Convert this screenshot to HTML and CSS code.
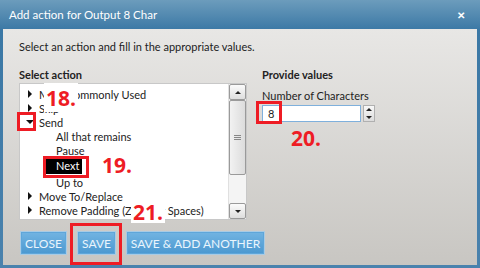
FILE: index.html
```html
<!DOCTYPE html>
<html lang="en">
<head>
    <meta charset="UTF-8">
    <title>Add action</title>
    <link rel="stylesheet" href="styles.css">
</head>
<body>
    <div class="dialog">
        <div class="titlebar">
            <span class="title">Add action for Output 8 Char</span>
            <span class="close-x">&#x2715;</span>
        </div>
        <div class="panel">
            <p class="intro">Select an action and fill in the appropriate values.</p>

            <div class="columns">
                <div class="col-left">
                    <h4>Select action</h4>
                    <div class="listbox">
                        <ul class="tree">
                            <li class="node"><span class="arrow right"></span>Most Commonly Used</li>
                            <li class="node"><span class="arrow right"></span>Skip</li>
                            <li class="node"><span class="arrow down"></span>Send</li>
                            <li class="leaf">All that remains</li>
                            <li class="leaf">Pause</li>
                            <li class="leaf sel-row"><span class="selected">Next</span></li>
                            <li class="leaf">Up to</li>
                            <li class="node"><span class="arrow right"></span>Move To/Replace</li>
                            <li class="node"><span class="arrow right"></span>Remove Padding (Zeros or Spaces)</li>
                        </ul>
                        <div class="scrollbar">
                            <div class="sb-btn"><span class="tri up"></span></div>
                            <div class="sb-thumb"><span class="grip"></span></div>
                            <div class="sb-track"></div>
                            <div class="sb-btn"><span class="tri dn"></span></div>
                        </div>
                    </div>
                </div>
                <div class="col-right">
                    <h4>Provide values</h4>
                    <label class="field-label">Number of Characters</label>
                    <div class="spin">
                        <div class="spin-input">8</div>
                        <div class="spin-btns">
                            <span class="tri up"></span>
                            <span class="tri dn"></span>
                        </div>
                    </div>
                </div>
            </div>

            <div class="buttons">
                <button class="btn btn-close">CLOSE</button>
                <button class="btn btn-save">SAVE</button>
                <button class="btn btn-another">SAVE &amp; ADD ANOTHER</button>
            </div>

            <!-- callouts -->
            <span class="callout c18">18.</span>
            <span class="redbox box-arrow"></span>
            <span class="redbox box-next"></span>
            <span class="callout c19">19.</span>
            <span class="redbox box-eight"></span>
            <span class="callout c20">20.</span>
            <span class="callout c21">21.</span>
            <span class="redbox box-save"></span>
        </div>
    </div>
</body>
</html>
```

FILE: styles.css
```css
* {
    margin: 0;
    padding: 0;
    box-sizing: border-box;
}
html, body {
    width: 480px;
    height: 268px;
    overflow: hidden;
}
body {
    font-family: Lato, "Noto Sans", sans-serif;
    color: #222;
}
.dialog {
    width: 480px;
    height: 268px;
    display: flex;
    flex-direction: column;
    background: linear-gradient(#6c9cbc, #3b78a5 30px, #4a82ad);
    padding: 0 3px 3px 3px;
}
.titlebar {
    height: 29px;
    display: flex;
    align-items: center;
    justify-content: space-between;
    padding: 0 12px 0 6px;
    color: #fff;
}
.title {
    font-size: 11.5px;
}
.close-x {
    font-size: 10px;
    font-weight: bold;
}
.panel {
    flex: 1;
    position: relative;
    background: linear-gradient(#e8e7e5, #c8c6c2);
    padding: 10px 0 0 16px;
    display: flex;
    flex-direction: column;
}
.intro {
    font-size: 11px;
    line-height: 16px;
}
.columns {
    display: flex;
    margin-top: 12px;
}
h4 {
    font-size: 11px;
    font-weight: bold;
    line-height: 16px;
}
.col-left {
    width: 228px;
}
.listbox {
    height: 137px;
    background: #fff;
    border: 1px solid #c8c8c8;
    display: flex;
    justify-content: space-between;
    overflow: hidden;
}
.tree {
    list-style: none;
    padding-top: 3px;
    font-size: 11px;
}
.tree li {
    height: 14px;
    white-space: nowrap;
    display: flex;
    align-items: center;
}
.tree li.sel-row {
    height: 18px;
}
.node {
    padding-left: 7px;
}
.leaf {
    padding-left: 36px;
}
.arrow {
    display: inline-block;
    width: 11px;
    margin-right: 1px;
    height: 8px;
    position: relative;
}
.arrow.right::before {
    content: "";
    position: absolute;
    left: 1px;
    top: 0;
    border-left: 4px solid #111;
    border-top: 4px solid transparent;
    border-bottom: 4px solid transparent;
}
.arrow.down::before {
    content: "";
    position: absolute;
    left: -1px;
    top: 2px;
    border-top: 4px solid #111;
    border-left: 4px solid transparent;
    border-right: 4px solid transparent;
}
.selected {
    background: #000;
    color: #fff;
    margin-left: -10px;
    padding: 0 3px 0 10px;
    line-height: 16px;
}
.scrollbar {
    width: 18px;
    display: flex;
    flex-direction: column;
    background: #f4f4f4;
    border-left: 1px solid #e0e0e0;
}
.sb-btn {
    height: 16px;
    border: 1px solid #9a9a9a;
    border-radius: 2px;
    background: linear-gradient(#fbfbfb, #dedede);
    display: flex;
    align-items: center;
    justify-content: center;
}
.sb-thumb {
    height: 75px;
    border: 1px solid #9a9a9a;
    border-radius: 2px;
    background: linear-gradient(90deg, #f2f2f2, #dcdcdc);
    display: flex;
    align-items: center;
    justify-content: center;
}
.grip {
    width: 7px;
    height: 5px;
    border-top: 1px solid #888;
    border-bottom: 1px solid #888;
    position: relative;
}
.grip::after {
    content: "";
    position: absolute;
    left: 0;
    right: 0;
    top: 1px;
    border-top: 1px solid #888;
}
.sb-track {
    flex: 1;
}
.tri {
    display: inline-block;
    width: 0;
    height: 0;
    border-left: 3px solid transparent;
    border-right: 3px solid transparent;
}
.tri.up {
    border-bottom: 3px solid #222;
}
.tri.dn {
    border-top: 3px solid #222;
}
.col-right {
    margin-left: 15px;
}
.field-label {
    display: block;
    font-size: 11px;
    line-height: 16px;
    margin-top: 5px;
}
.spin {
    display: flex;
    margin-top: 1px;
}
.spin-input {
    width: 99px;
    height: 17px;
    border: 1px solid #7fb0dc;
    background: #fff;
    font-size: 11px;
    line-height: 15px;
    padding-left: 5px;
}
.spin-btns {
    width: 12px;
    margin-left: 2px;
    height: 17px;
    display: flex;
    flex-direction: column;
    align-items: center;
    justify-content: space-around;
    background: linear-gradient(#f8f8f8, #dcdcdc);
    border: 1px solid #b0b0b0;
}
.buttons {
    display: flex;
    gap: 10px;
    margin-top: 11px;
    padding-left: 1px;
}
.btn {
    height: 24px;
    padding: 0;
    font-family: Lato, "Noto Sans", sans-serif;
    font-size: 12px;
    white-space: nowrap;
    color: #eaf5fd;
    background: linear-gradient(#72b4e2, #4b98d0);
    border: 1px solid #a9cbe4;
    box-shadow: inset 0 0 0 1px #5ea6da;
}
.btn-close {
    width: 47px;
}
.btn-save {
    width: 39px;
}
.btn-another {
    width: 139px;
}
.callout {
    position: absolute;
    color: #ee1c24;
    font-weight: bold;
    font-size: 21px;
    line-height: 22px;
    font-family: "Open Sans", "Noto Sans", sans-serif;
    background: #fff;
    padding: 0 2px;
}
.c18 {
    left: 41px;
    top: 54px;
    height: 29px;
    padding-top: 4px;
}
.c19 {
    left: 97px;
    top: 125px;
    background: transparent;
}
.c20 {
    left: 286px;
    top: 98px;
    background: transparent;
}
.c21 {
    left: 128px;
    top: 171px;
    height: 23px;
    padding-top: 1px;
}
.redbox {
    position: absolute;
    border: 3px solid #ee1c24;
}
.box-arrow {
    left: 14px;
    top: 83px;
    width: 19px;
    height: 19px;
}
.box-next {
    left: 40px;
    top: 127px;
    width: 46px;
    height: 22px;
}
.box-eight {
    left: 253px;
    top: 72px;
    width: 26px;
    height: 23px;
}
.box-save {
    left: 67px;
    top: 194px;
    width: 52px;
    height: 42px;
}
```
